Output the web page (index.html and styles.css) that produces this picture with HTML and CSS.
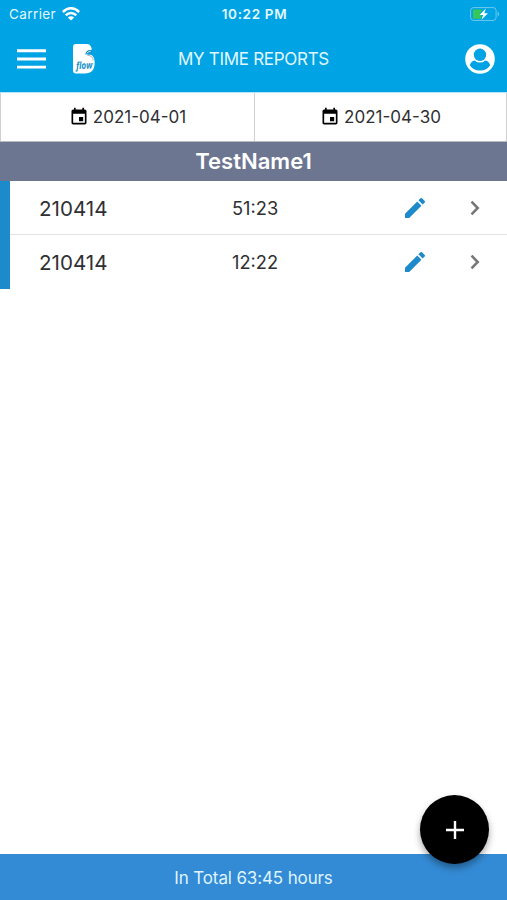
FILE: index.html
```html
<!DOCTYPE html>
<html lang="en">
<head>
<meta charset="utf-8">
<title>My time reports</title>
<link rel="stylesheet" href="styles.css">
</head>
<body>
<div class="app">
  <header class="header">
    <div class="status">
      <div class="carrier"><span>Carrier</span>
        <svg class="wifi" viewBox="0 0 18 14"><g fill="none" stroke="#fff" stroke-width="2.5"><path d="M.8 5Q9-2.4 17.2 5"/><path d="M3.7 8.3Q9 3.6 14.3 8.3"/></g><path d="M5.8 10.6Q9 7.8 12.2 10.6L9 13.6z" fill="#fff"/></svg>
      </div>
      <span class="clock">10:22 PM</span>
      <svg class="battery" viewBox="0 0 30 14"><rect x=".6" y=".6" width="25.5" height="12.8" rx="3" fill="none" stroke="#70c9f0" stroke-width="1"/><path d="M3 2.4h9.5L9.5 7.6l2 .6-.6 3.6H3z" fill="#35c759"/><path d="M27.7 4.5v5q3-2.5 0-5z" fill="#70c9f0"/><path d="M15.8 1.5 9.5 8h3.6l-1.7 4.7L18 6.3h-3.7z" fill="#fff"/></svg>
    </div>
    <nav class="nav">
      <svg class="menu" viewBox="0 0 28 19"><path d="M0 1.5h28M0 9.5h28M0 17.3h28" stroke="#fff" stroke-width="2.8"/></svg>
      <svg class="logo" viewBox="0 0 24 32"><path d="M4 1h11q2.5 0 4 2.4 1.2 2.2.2 4.5l-4.6 3.7 3.6-.2q4.5 1.3 4.5 8 0 11-10 11H4q-3 0-3-3V4q0-3 3-3z" fill="#fff"/><path d="M13.2 11.6q1-5.6 6.6-4.3l1.2 3.4-2-1.8-1.6 1.8 2 1.4q-3-1.4-6.2-.5z" fill="#178fc8"/><path d="M14.8 10.6q1.2-2.4 3.8-2.2" fill="none" stroke="#fff" stroke-width=".8"/><path d="M15.4 12.3q5.8.4 5.8 5.2" fill="none" stroke="#aaa" stroke-width=".9"/><text class="logo-text" transform="translate(4.2 26.2) rotate(-3)" textLength="16.5" lengthAdjust="spacingAndGlyphs">flow</text></svg>
      <h1 class="title">MY TIME REPORTS</h1>
      <svg class="user" viewBox="0 0 30 30"><circle cx="15" cy="15" r="14.8" fill="#fff"/><circle cx="15" cy="10.8" r="6.2" fill="#00a3e4"/><path d="M4.8 21.3Q6 16.8 9.6 16.4q5.4 4.4 10.8 0 3.6.4 4.8 4.9Q21.7 26.6 15 26.6T4.8 21.3z" fill="#00a3e4"/></svg>
    </nav>
  </header>
  <div class="dates">
    <div class="date"><svg viewBox="0 0 24 24"><path d="M17 12h-5v5h5v-5zM16 1v2H8V1H6v2H5c-1.11 0-2 .9-2 2v14c0 1.1.89 2 2 2h14c1.1 0 2-.9 2-2V5c0-1.1-.9-2-2-2h-1V1h-2zm3 18H5V8h14v11z"/></svg><span>2021-04-01</span></div>
    <div class="date"><svg viewBox="0 0 24 24"><path d="M17 12h-5v5h5v-5zM16 1v2H8V1H6v2H5c-1.11 0-2 .9-2 2v14c0 1.1.89 2 2 2h14c1.1 0 2-.9 2-2V5c0-1.1-.9-2-2-2h-1V1h-2zm3 18H5V8h14v11z"/></svg><span>2021-04-30</span></div>
  </div>
  <h2 class="name">TestName1</h2>
  <main class="list">
    <div class="row"><span class="code">210414</span><span class="time">51:23</span><svg class="edit" viewBox="3 3 18 18"><path d="M3 17.25V21h3.75L17.81 9.94l-3.75-3.75L3 17.25zM20.71 7.04a1 1 0 0 0 0-1.41l-2.34-2.34a1 1 0 0 0-1.41 0l-1.83 1.83 3.75 3.75 1.83-1.83z"/></svg><svg class="chevron" viewBox="0 0 10 16"><path d="m1.5 1.7 6.2 6.3-6.2 6.3"/></svg></div>
    <div class="row"><span class="code">210414</span><span class="time">12:22</span><svg class="edit" viewBox="3 3 18 18"><path d="M3 17.25V21h3.75L17.81 9.94l-3.75-3.75L3 17.25zM20.71 7.04a1 1 0 0 0 0-1.41l-2.34-2.34a1 1 0 0 0-1.41 0l-1.83 1.83 3.75 3.75 1.83-1.83z"/></svg><svg class="chevron" viewBox="0 0 10 16"><path d="m1.5 1.7 6.2 6.3-6.2 6.3"/></svg></div>
  </main>
  <footer class="footer">In Total 63:45 hours
    <button class="add" aria-label="Add"><svg viewBox="0 0 18 18"><path d="M9 0v18M0 9h18"/></svg></button>
  </footer>
</div>
</body>
</html>
```
FILE: styles.css
```css
* { box-sizing: border-box; }
body { margin: 0; background: #fff; font-family: Inter, "Liberation Sans", sans-serif; color: #303033; }
svg { display: block; flex: none; }
h1, h2 { margin: 0; }
.app { height: 900px; display: flex; flex-direction: column; overflow: hidden; }
.header { height: 93px; background: #00a3e4; border-bottom: 1px solid #b5e3f5; color: #e2f8ff; }
.status { height: 27px; display: grid; grid-template-columns: 1fr auto 1fr; align-items: center; padding: 1px 7px 0 9px; font-size: 13px; }
.carrier { display: flex; align-items: center; gap: 6px; font-size: 13.5px; letter-spacing: .4px; }
.wifi { width: 18px; height: 14px; }
.clock { font-size: 13.5px; font-weight: 600; letter-spacing: .65px; }
.battery { width: 30px; height: 14px; justify-self: end; }
.nav { height: 64px; display: grid; grid-template-columns: 55px 106px 1fr 30px; align-items: center; padding: 0 12px 0 17px; }
.menu { width: 29px; height: 20px; }
.logo { width: 24px; height: 32px; }
.logo-text { font: italic 700 10px "Open Sans", sans-serif; fill: #168fc5; }
.title { font-size: 17px; font-weight: 400; letter-spacing: -.3px; }
.user { width: 30px; height: 30px; justify-self: end; }
.dates { height: 49px; display: grid; grid-template-columns: 254px 1fr; border-bottom: 1px solid #b9bac0; }
.date { display: flex; align-items: center; justify-content: center; gap: 4px; font-size: 17px; border-left: 1px solid #d0d0d0; }
.date:last-child { border-right: 1px solid #d0d0d0; }
.date svg { width: 20px; height: 20px; fill: #000; }
.name { height: 39px; background: #6d7691; color: #fff; text-align: center; font-size: 22px; line-height: 39px; font-weight: 600; }
.list { border-left: 10px solid #1d8acb; }
.row { height: 54px; display: grid; grid-template-columns: 193px 173px 65px 10px; align-items: center; padding-left: 29px; padding-top: 1px; border-bottom: 1px solid #e3e3e3; }
.row:last-child { border-bottom: 0; padding-top: 0; }
.code { font-size: 20.6px; }
.time { font-size: 18.3px; }
.edit { width: 20px; height: 20px; fill: #1d8acb; }
.chevron { width: 10px; height: 16px; fill: none; stroke: #777; stroke-width: 2.6; }
.footer { position: relative; height: 46px; margin-top: auto; background: #348bd5; color: #dff4ff; text-align: center; font-size: 17px; letter-spacing: -.13px; line-height: 48px; }
.add { position: absolute; right: 18px; top: -59px; width: 69px; height: 69px; padding: 0; border: 0; border-radius: 50%; background: #000; display: grid; place-items: center; box-shadow: 0 4px 7px rgba(0,0,0,.35); }
.add svg { width: 18px; height: 18px; stroke: #fff; stroke-width: 2.4; }
```
